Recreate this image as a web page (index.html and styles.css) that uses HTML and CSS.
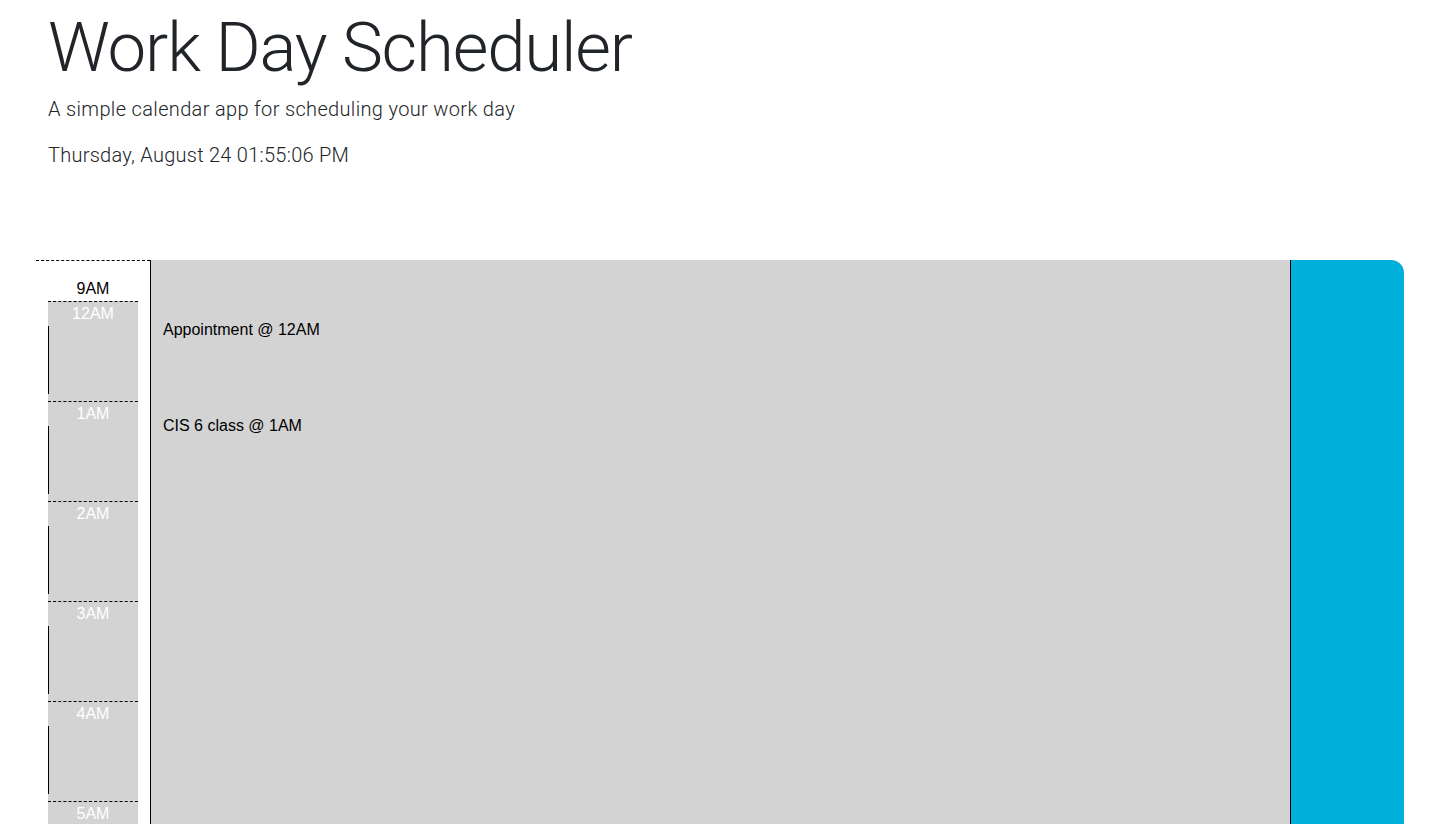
FILE: index.html
```html
<!DOCTYPE html>
<html lang="en">
<head>
<meta charset="utf-8">
<title>Work Day Scheduler</title>
<link rel="stylesheet" href="styles.css">
</head>
<body>
<header class="jumbotron">
  <h1 class="title">Work Day Scheduler</h1>
  <p class="lead">A simple calendar app for scheduling your work day</p>
  <p class="current-day">Thursday, August 24 01:55:06 PM</p>
</header>
<main class="schedule">
  <div class="hours">
    <div class="hour-now">9AM</div>
    <div class="hour-block"><div class="hour-label">12AM</div><div class="hour-bar"></div></div>
    <div class="hour-block"><div class="hour-label">1AM</div><div class="hour-bar"></div></div>
    <div class="hour-block"><div class="hour-label">2AM</div><div class="hour-bar"></div></div>
    <div class="hour-block"><div class="hour-label">3AM</div><div class="hour-bar"></div></div>
    <div class="hour-block"><div class="hour-label">4AM</div><div class="hour-bar"></div></div>
    <div class="hour-block"><div class="hour-label">5AM</div><div class="hour-bar"></div></div>
    <div class="hour-block"><div class="hour-label">6AM</div><div class="hour-bar"></div></div>
    <div class="hour-block"><div class="hour-label">7AM</div><div class="hour-bar"></div></div>
  </div>
  <div class="description">
    <p class="entry entry-first">Appointment @ 12AM</p>
    <p class="entry entry-second">CIS 6 class @ 1AM</p>
  </div>
  <div class="save-btn"></div>
</main>
</body>
</html>
```
FILE: styles.css
```css
* { box-sizing: border-box; }
html, body { margin: 0; padding: 0; background: #fff; }
body {
  font-family: "Liberation Sans", Arial, sans-serif;
  font-size: 16px;
  color: #000;
}
.jumbotron {
  padding: 6px 48px 0;
  height: 260px;
  color: #212529;
  font-family: Roboto, "Liberation Sans", sans-serif;
  font-weight: 300;
}
.title {
  margin: 0;
  font-size: 69px;
  line-height: 84px;
  font-weight: 300;
  letter-spacing: -1.2px;
}
.lead {
  margin: 7px 0 0;
  font-size: 20px;
  line-height: 24px;
  letter-spacing: 0.34px;
}
.current-day {
  margin: 22px 0 0;
  font-size: 20px;
  line-height: 24px;
  letter-spacing: 0.26px;
}
.schedule {
  display: flex;
  margin-left: 36px;
  width: 1368px;
}
.hours {
  flex: none;
  width: 114px;
  padding: 0 12px;
  border-top: 1px dashed #000;
}
.hour-now {
  height: 40px;
  padding-top: 19px;
  line-height: 18px;
  text-align: center;
}
.hour-block {
  height: 100px;
  background: #d3d3d3;
  border-top: 1px dashed #000;
}
.hour-label {
  height: 24px;
  padding-top: 3px;
  line-height: 18px;
  text-align: center;
  color: #fff;
}
.hour-bar {
  height: 68px;
  border-left: 1px solid #000;
}
.description {
  flex: none;
  width: 1140px;
  background: #d3d3d3;
  border-left: 1px solid #000;
  padding: 61px 12px 0;
}
.entry {
  margin: 0;
  line-height: 18px;
}
.entry-second { margin-top: 78px; }
.save-btn {
  flex: none;
  width: 114px;
  background: #00b0db;
  border-left: 1px solid #000;
  border-top-right-radius: 13px;
}
```
